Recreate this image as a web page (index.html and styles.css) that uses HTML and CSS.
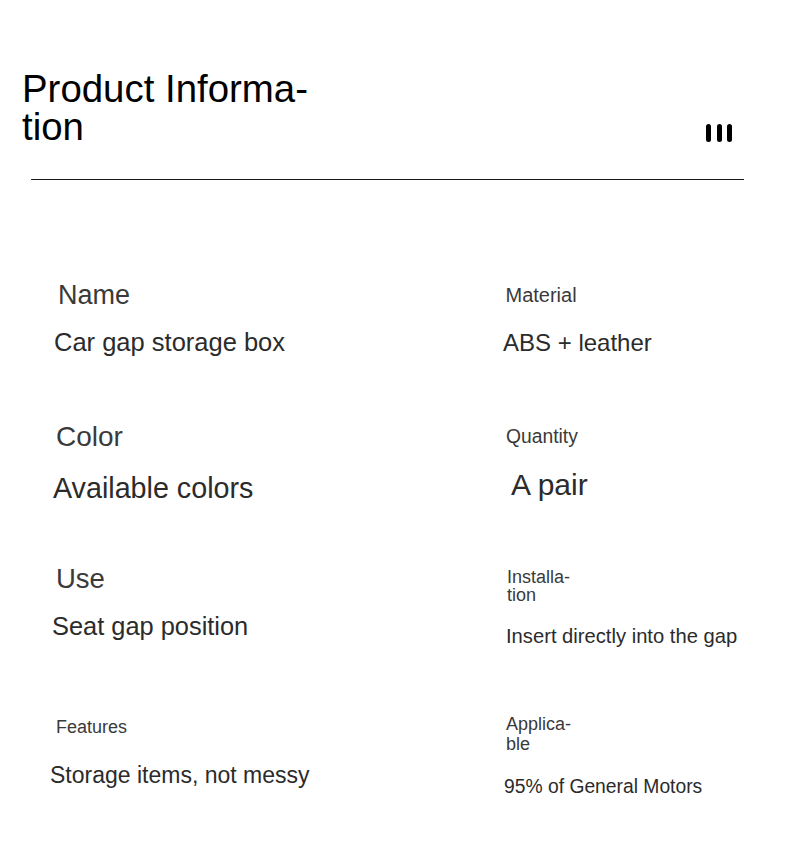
FILE: index.html
```html
<!DOCTYPE html>
<html lang="en">
<head>
<meta charset="utf-8">
<title>Product Information</title>
<link rel="stylesheet" href="styles.css">
</head>
<body>
<main class="page">
  <header class="header">
    <h1 class="title">Product Informa&shy;tion</h1>
    <span class="menu" aria-hidden="true"><i class="menu__bar"></i><i class="menu__bar"></i><i class="menu__bar"></i></span>
  </header>
  <hr class="rule">
  <section class="specs">
    <div class="spec spec--name">
      <div class="spec__label">Name</div>
      <div class="spec__value">Car gap storage box</div>
    </div>
    <div class="spec spec--material">
      <div class="spec__label">Material</div>
      <div class="spec__value">ABS + leather</div>
    </div>
    <div class="spec spec--color">
      <div class="spec__label">Color</div>
      <div class="spec__value">Available colors</div>
    </div>
    <div class="spec spec--quantity">
      <div class="spec__label">Quantity</div>
      <div class="spec__value">A pair</div>
    </div>
    <div class="spec spec--use">
      <div class="spec__label">Use</div>
      <div class="spec__value">Seat gap position</div>
    </div>
    <div class="spec spec--install">
      <div class="spec__label spec__label--narrow">Installa&shy;tion</div>
      <div class="spec__value">Insert directly into the gap</div>
    </div>
    <div class="spec spec--features">
      <div class="spec__label">Features</div>
      <div class="spec__value">Storage items, not messy</div>
    </div>
    <div class="spec spec--applicable">
      <div class="spec__label spec__label--narrow">Applica&shy;ble</div>
      <div class="spec__value">95% of General Motors</div>
    </div>
  </section>
</main>
</body>
</html>
```

FILE: styles.css
```css
* { box-sizing: border-box; }

html, body {
  margin: 0;
  padding: 0;
  background: #ffffff;
}

body {
  font-family: "Liberation Sans", Arial, sans-serif;
  color: #333333;
  width: 790px;
  height: 849px;
  overflow: hidden;
}

.page {
  padding-top: 70px;
}

.header {
  display: flex;
  justify-content: space-between;
  align-items: flex-start;
  height: 75px;
  padding: 0 58px 0 22px;
}

.title {
  margin: 0;
  width: 310px;
  font-size: 38.4px;
  line-height: 37.6px;
  font-weight: 400;
  color: #000000;
}

.menu {
  display: flex;
  gap: 5.5px;
  margin-top: 54px;
}

.menu__bar {
  display: block;
  width: 5px;
  height: 18px;
  border-radius: 2.5px;
  background: #000000;
}

.rule {
  margin: 34px 46px 0 31px;
  border: 0;
  height: 1px;
  background: #1a1a1a;
}

.specs {
  margin-top: 90px;
  display: grid;
  grid-template-columns: 450px 1fr;
  grid-auto-rows: 143px;
}

.spec {
  padding-top: var(--pt);
  padding-left: var(--pl);
}

.spec__label {
  font-size: var(--lf);
  line-height: var(--lh, 1);
  color: #3a3a3a;
}

.spec__label--narrow {
  width: 75px;
}

.spec__value {
  margin-top: var(--mt);
  margin-left: var(--vx);
  font-size: var(--vf);
  line-height: 1;
  white-space: nowrap;
  color: #2b2b2b;
}

.spec--name     { --pt: 12.1px; --pl: 58px;   --lf: 27px;   --mt: 20.7px; --vx: -4px;   --vf: 25.5px; }
.spec--material { --pt: 14.8px; --pl: 55.5px; --lf: 20px;   --mt: 26.6px; --vx: -2.5px; --vf: 24px; }
.spec--color    { --pt: 10px;   --pl: 56px;   --lf: 28px;   --mt: 23px;   --vx: -3px;   --vf: 28.7px; }
.spec--quantity { --pt: 14px;   --pl: 56px;   --lf: 19.3px; --mt: 23.3px; --vx: 5px;    --vf: 30px; }
.spec--use      { --pt: 9px;    --pl: 56px;   --lf: 27.5px; --mt: 21.7px; --vx: -4px;   --vf: 25.4px; }
.spec--install  { --pt: 12px;   --pl: 57px;   --lf: 18px;   --lh: 18px;   --mt: 21.6px; --vx: -1px; --vf: 20.2px; }
.spec--features { --pt: 18.5px; --pl: 56px;   --lf: 18px;   --mt: 28.3px; --vx: -6px;   --vf: 23px; }
.spec--applicable { --pt: 16px; --pl: 56px;   --lf: 18px;   --lh: 19.5px; --mt: 23px;   --vx: -2px; --vf: 19.3px; }
```
